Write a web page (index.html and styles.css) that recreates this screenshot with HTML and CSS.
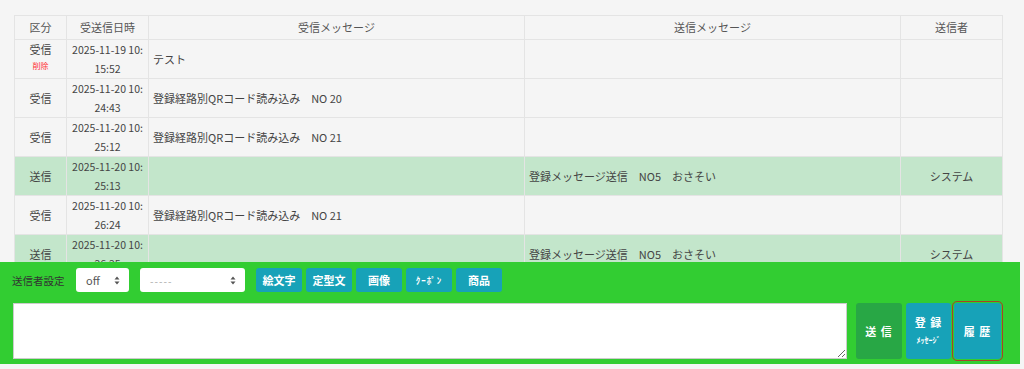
FILE: index.html
```html
<!DOCTYPE html>
<html lang="ja">
<head>
    <meta charset="UTF-8">
    <meta name="viewport" content="width=device-width, initial-scale=1.0">
    <title>トーク履歴</title>
    <link rel="stylesheet" href="styles.css">
</head>
<body>
    <div class="page">
        <div class="history">
            <table class="talk-table">
                <colgroup>
                    <col class="col-kind">
                    <col class="col-date">
                    <col class="col-msg">
                    <col class="col-msg">
                    <col>
                </colgroup>
                <thead>
                    <tr>
                        <th>区分</th>
                        <th>受送信日時</th>
                        <th>受信メッセージ</th>
                        <th>送信メッセージ</th>
                        <th>送信者</th>
                    </tr>
                </thead>
                <tbody>
                    <tr>
                        <td class="center">受信<br><span class="del">削除</span></td>
                        <td class="center date">2025-11-19 10:<br>15:52</td>
                        <td>テスト</td>
                        <td></td>
                        <td></td>
                    </tr>
                    <tr>
                        <td class="center">受信</td>
                        <td class="center date">2025-11-20 10:<br>24:43</td>
                        <td>登録経路別QRコード読み込み　NO 20</td>
                        <td></td>
                        <td></td>
                    </tr>
                    <tr>
                        <td class="center">受信</td>
                        <td class="center date">2025-11-20 10:<br>25:12</td>
                        <td>登録経路別QRコード読み込み　NO 21</td>
                        <td></td>
                        <td></td>
                    </tr>
                    <tr class="sent">
                        <td class="center">送信</td>
                        <td class="center date">2025-11-20 10:<br>25:13</td>
                        <td></td>
                        <td>登録メッセージ送信　NO5　おさそい</td>
                        <td class="center">システム</td>
                    </tr>
                    <tr>
                        <td class="center">受信</td>
                        <td class="center date">2025-11-20 10:<br>26:24</td>
                        <td>登録経路別QRコード読み込み　NO 21</td>
                        <td></td>
                        <td></td>
                    </tr>
                    <tr class="sent">
                        <td class="center">送信</td>
                        <td class="center date">2025-11-20 10:<br>26:25</td>
                        <td></td>
                        <td>登録メッセージ送信　NO5　おさそい</td>
                        <td class="center">システム</td>
                    </tr>
                </tbody>
            </table>
        </div>

        <div class="send-panel">
            <div class="tool-row">
                <span class="tool-label">送信者設定</span>
                <div class="fake-select sel-small">
                    <span>off</span>
                    <svg width="6" height="9" viewBox="0 0 6 9"><path d="M3 0.5 L5.5 3.5 H0.5 Z M3 8.5 L5.5 5.5 H0.5 Z" fill="#555"/></svg>
                </div>
                <div class="fake-select sel-wide">
                    <span class="dim">-----</span>
                    <svg width="6" height="9" viewBox="0 0 6 9"><path d="M3 0.5 L5.5 3.5 H0.5 Z M3 8.5 L5.5 5.5 H0.5 Z" fill="#555"/></svg>
                </div>
                <div class="tool-btns">
                    <button class="btn btn-info">絵文字</button>
                    <button class="btn btn-info">定型文</button>
                    <button class="btn btn-info">画像</button>
                    <button class="btn btn-info half">ｸｰﾎﾟﾝ</button>
                    <button class="btn btn-info">商品</button>
                </div>
            </div>
            <div class="input-row">
                <textarea class="msg-input"></textarea>
                <button class="btn btn-send big">送 信</button>
                <button class="btn btn-info big two-line">登 録<span class="sub">ﾒｯｾｰｼﾞ</span></button>
                <button class="btn btn-info big focused">履 歴</button>
            </div>
        </div>
    </div>
</body>
</html>
```

FILE: styles.css
```css
* {
    box-sizing: border-box;
}

body {
    margin: 0;
    background-color: #f5f5f5;
    color: #444;
    font-family: "Noto Sans CJK JP", "Noto Sans", sans-serif;
    font-size: 11px;
}

.page {
    height: 369px;
    display: flex;
    flex-direction: column;
    overflow: hidden;
}

.history {
    height: 262px;
    overflow: hidden;
    padding: 15px 0 0 14px;
}

.talk-table {
    width: 989px;
    border-collapse: collapse;
    table-layout: fixed;
}

.col-kind { width: 52px; }
.col-date { width: 82px; }
.col-msg { width: 376px; }

.talk-table th,
.talk-table td {
    border: 1px solid #e4e4e4;
    line-height: 19px;
    padding: 0 4px;
    vertical-align: middle;
}

.talk-table th {
    font-weight: normal;
    color: #555;
    height: 24px;
}

.talk-table td {
    height: 39px;
}

.talk-table .center {
    text-align: center;
}

.talk-table .date {
    white-space: nowrap;
    padding: 0;
    font-size: 10.5px;
}

.talk-table .sent td {
    background-color: #c3e6cb;
}

.del {
    color: #f33;
    font-size: 8px;
    line-height: 14px;
    display: inline-block;
    vertical-align: top;
}

.send-panel {
    width: 1020px;
    height: 102px;
    background-color: #32cd32;
    padding: 6px 0 0 12px;
}

.tool-row {
    display: flex;
    align-items: center;
    height: 24px;
}

.tool-label {
    color: #333;
    width: 64px;
    font-size: 10.5px;
    white-space: nowrap;
}

.fake-select {
    height: 24px;
    background: #fff;
    border-radius: 3px;
    display: flex;
    align-items: center;
    justify-content: space-between;
    padding: 0 9px 0 10px;
    color: #555;
    margin-right: 11px;
}

.fake-select .dim {
    color: #aaa;
    letter-spacing: 1px;
    font-size: 10px;
}

.sel-small { width: 53px; }
.sel-wide { width: 105px; }

.tool-btns {
    display: flex;
    gap: 4px;
}

.btn {
    border: none;
    border-radius: 3px;
    color: #fff;
    font-family: inherit;
    font-weight: bold;
    font-size: 11px;
    padding: 0;
    cursor: pointer;
}

.btn-info {
    background-color: #17a2b8;
}

.btn-send {
    background-color: #28a745;
}

.tool-btns .btn {
    width: 46px;
    height: 24px;
}

.tool-btns .half {
    font-size: 9px;
    letter-spacing: 1px;
}

.input-row {
    display: flex;
    align-items: stretch;
    margin-top: 11px;
    height: 56px;
}

.msg-input {
    width: 834px;
    height: 56px;
    border: 1px solid #ccc;
    border-radius: 0;
    margin: 0 9px 0 1px;
    resize: vertical;
}

.big {
    width: 46px;
    height: 56px;
    margin-right: 4px;
    letter-spacing: 1px;
}

.big.two-line {
    width: 45px;
    margin-right: 3px;
}

.two-line {
    display: flex;
    flex-direction: column;
    align-items: center;
    justify-content: center;
    line-height: 18px;
}

.two-line .sub {
    font-size: 8px;
    letter-spacing: 0;
}

.focused {
    width: 47px;
    outline: 1px solid #a8402a;
    outline-offset: 1px;
}
```
